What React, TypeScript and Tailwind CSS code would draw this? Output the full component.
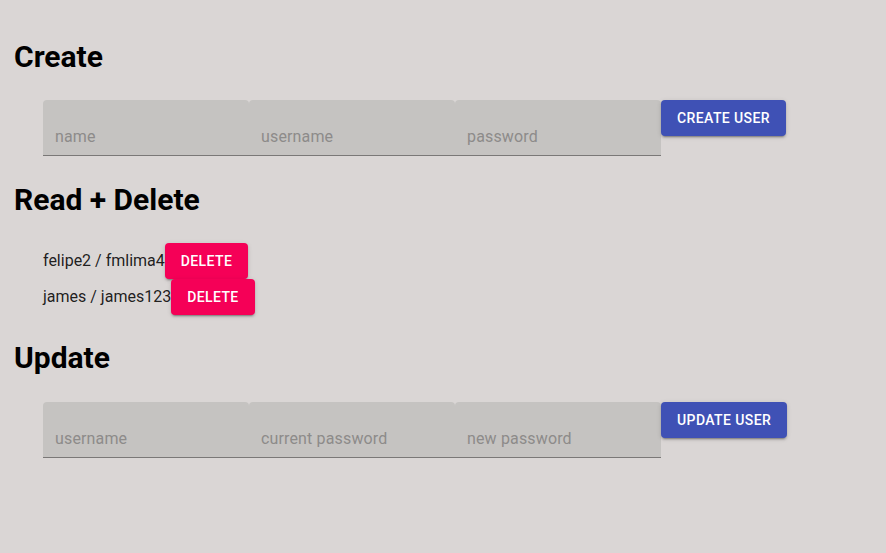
import React from "react";

function Field({ placeholder }: { placeholder: string }) {
  return (
    <div className="w-[206px] h-[56px] bg-[#c5c3c1] rounded-t-[4px] border-b border-[#7a7877] px-[12px] pt-[25px] pb-[8px] box-border">
      <input
        placeholder={placeholder}
        className="w-full h-[23px] bg-transparent outline-none text-[16px] tracking-[0.15px] text-[rgba(0,0,0,0.87)] placeholder:text-[#8d8b8a]"
      />
    </div>
  );
}

function Btn({ label, color }: { label: string; color: "blue" | "pink" }) {
  const cls =
    color === "blue"
      ? "bg-[#3f51b5]"
      : "bg-[#f50057]";
  return (
    <button
      className={`${cls} h-[36px] px-[16px] rounded-[4px] text-white text-[14px] font-medium tracking-[0.4px] uppercase shadow-[0_3px_1px_-2px_rgba(0,0,0,0.2),0_2px_2px_0_rgba(0,0,0,0.14),0_1px_5px_0_rgba(0,0,0,0.12)]`}
    >
      {label}
    </button>
  );
}

export default function App() {
  return (
    <div
      className="w-full min-h-[553px] bg-[#dad6d5] text-black"
      style={{ fontFamily: "Roboto, 'Liberation Sans', sans-serif" }}
    >
      <div className="pl-[14px] pt-[40px]">
        <h2 className="text-[30px] font-bold leading-[34px]">Create</h2>
        <div className="mt-[26px] ml-[29px] flex items-start">
          <Field placeholder="name" />
          <Field placeholder="username" />
          <Field placeholder="password" />
          <Btn label="Create User" color="blue" />
        </div>
        <h2 className="mt-[27px] text-[30px] font-bold leading-[34px]">Read + Delete</h2>
        <div className="mt-[26px] ml-[29px] flex flex-col">
          <div className="flex items-center h-[36px] text-[16px] text-[rgba(0,0,0,0.87)]">
            <span>felipe2 / fmlima4</span>
            <Btn label="Delete" color="pink" />
          </div>
          <div className="flex items-center h-[36px] text-[16px] text-[rgba(0,0,0,0.87)]">
            <span>james / james123</span>
            <Btn label="Delete" color="pink" />
          </div>
        </div>
        <h2 className="mt-[26px] text-[30px] font-bold leading-[34px]">Update</h2>
        <div className="mt-[27px] ml-[29px] flex items-start">
          <Field placeholder="username" />
          <Field placeholder="current password" />
          <Field placeholder="new password" />
          <Btn label="Update User" color="blue" />
        </div>
      </div>
    </div>
  );
}
